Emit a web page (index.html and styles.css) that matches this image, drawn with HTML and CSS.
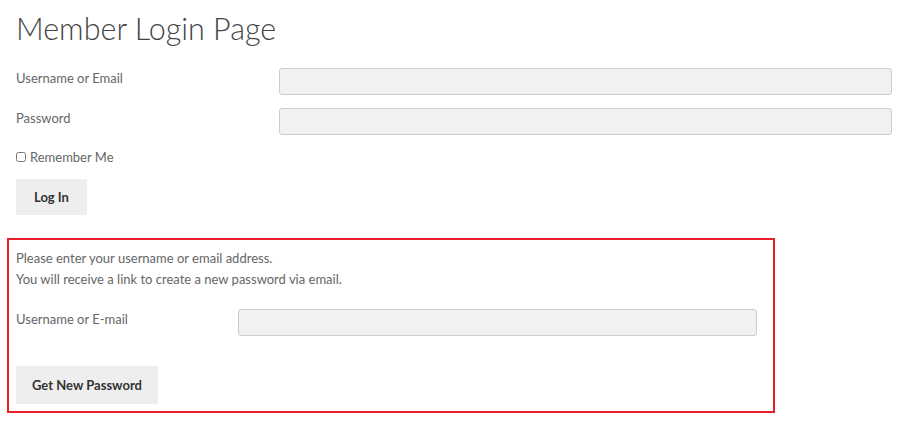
FILE: index.html
```html
<!DOCTYPE html>
<html lang="en">
<head>
  <meta charset="UTF-8">
  <title>Member Login Page</title>
  <link rel="stylesheet" href="styles.css">
</head>
<body>
  <h1 class="page-title">Member Login Page</h1>

  <form class="login-form">
    <div class="field-row">
      <label class="field-label" for="user_login">Username or Email</label>
      <input class="field-input" type="text" id="user_login">
    </div>
    <div class="field-row">
      <label class="field-label" for="user_pass">Password</label>
      <input class="field-input" type="password" id="user_pass">
    </div>
    <div class="remember">
      <input type="checkbox" id="rememberme">
      <label for="rememberme">Remember Me</label>
    </div>
    <button type="button" class="btn btn-login">Log In</button>
  </form>

  <form class="lost-password">
    <p class="lost-text">Please enter your username or email address.</p>
    <p class="lost-text">You will receive a link to create a new password via email.</p>
    <div class="field-row lost-row">
      <label class="field-label" for="lost_login">Username or E-mail</label>
      <input class="field-input" type="text" id="lost_login">
    </div>
    <button type="button" class="btn btn-reset">Get New Password</button>
  </form>
</body>
</html>
```

FILE: styles.css
```css
body {
  margin: 0;
  padding: 0 8px 0 16px;
  font-family: Lato, "Open Sans", sans-serif;
  font-size: 13px;
  color: #666;
  background: #fff;
}

.page-title {
  margin: 6px 0 0 0;
  font-size: 30.5px;
  font-weight: 300;
  line-height: 44px;
  color: #444;
}

.login-form {
  margin-top: 18px;
}

.field-row {
  display: grid;
  grid-template-columns: 30% 70%;
  align-items: start;
  margin-bottom: 13px;
}

.field-label {
  padding-top: 1px;
  line-height: 18px;
}

.field-input {
  box-sizing: border-box;
  width: 100%;
  height: 27px;
  margin: 0;
  border: 1px solid #ccc;
  border-radius: 3px;
  background: #f1f1f1;
}

.remember {
  display: flex;
  align-items: center;
  gap: 4px;
  height: 18px;
  margin-top: 1px;
}

.remember input {
  margin: 0;
  width: 10px;
  height: 10px;
}

.btn {
  display: block;
  border: none;
  border-radius: 0;
  background: #eeeeee;
  color: #333;
  font-family: inherit;
  font-size: 13px;
  font-weight: bold;
  cursor: pointer;
}

.btn-login {
  margin-top: 13px;
  height: 36px;
  padding: 0 18px;
}

.lost-password {
  width: 741px;
  margin: 23px 0 0 -9px;
  padding: 8px 16px 7px 7px;
  border: 2px solid #e8202a;
}

.lost-text {
  margin: 0;
  line-height: 21px;
}

.lost-row {
  margin-top: 19px;
}

.btn-reset {
  margin-top: 30px;
  height: 38px;
  padding: 0 16px;
}
```
